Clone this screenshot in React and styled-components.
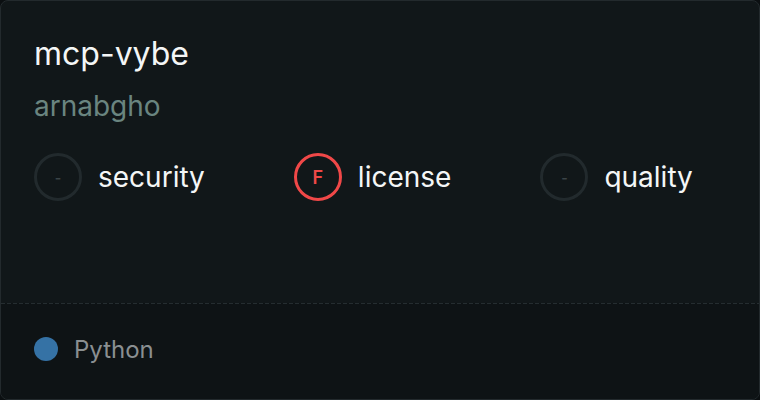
import React from "react";
import styled, { createGlobalStyle } from "styled-components";

const Global = createGlobalStyle`
  html, body {
    margin: 0;
    padding: 0;
    background: #0b0f11;
  }
  body {
    font-family: Inter, "Noto Sans", sans-serif;
  }
`;

const Card = styled.div`
  width: 760px;
  height: 400px;
  box-sizing: border-box;
  border: 1px solid #232a2d;
  border-radius: 8px;
  overflow: hidden;
  display: flex;
  flex-direction: column;
  background: #111719;
`;

const Top = styled.div`
  flex: 1;
  padding: 36px 33px 0;
  display: flex;
  flex-direction: column;
`;

const Title = styled.div`
  color: #f4f6f6;
  font-size: 32px;
  line-height: 34px;
  font-weight: 400;
`;

const Author = styled.div`
  color: #6a8580;
  font-size: 28px;
  line-height: 30px;
  margin-top: 20px;
`;

const Scores = styled.div`
  display: flex;
  gap: 89px;
  margin-top: 32px;
`;

const Score = styled.div`
  display: flex;
  align-items: center;
  gap: 16px;
`;

const Badge = styled.div`
  width: 48px;
  height: 48px;
  box-sizing: border-box;
  border-radius: 50%;
  border: 3px solid ${(p) => (p.$grade ? "#f04848" : "#222a2d")};
  display: flex;
  align-items: center;
  justify-content: center;
  color: ${(p) => (p.$grade ? "#f04848" : "#3b4447")};
  font-size: ${(p) => (p.$grade ? "18px" : "14px")};
  font-weight: 600;
`;

const Label = styled.div`
  color: #f4f6f6;
  font-size: 28px;
  line-height: 30px;
`;

const Footer = styled.div`
  height: 96px;
  box-sizing: border-box;
  padding: 0 33px 4px;
  background: #0e1315;
  display: flex;
  align-items: center;
  gap: 16px;
  background-image: repeating-linear-gradient(
    to right,
    #252d30 0 4px,
    transparent 4px 6px
  );
  background-size: 100% 1px;
  background-repeat: no-repeat;
  background-position: 0 0;
`;

const Dot = styled.span`
  width: 24px;
  height: 24px;
  border-radius: 50%;
  background: ${(p) => p.$color};
`;

const Lang = styled.span`
  color: #8a8f91;
  font-size: 24px;
`;

const scores = [
  { name: "security", grade: null },
  { name: "license", grade: "F" },
  { name: "quality", grade: null },
];

export default function App() {
  return (
    <>
      <Global />
      <Card>
        <Top>
          <Title>mcp-vybe</Title>
          <Author>arnabgho</Author>
          <Scores>
            {scores.map((s) => (
              <Score key={s.name}>
                <Badge $grade={s.grade}>{s.grade || "-"}</Badge>
                <Label>{s.name}</Label>
              </Score>
            ))}
          </Scores>
        </Top>
        <Footer>
          <Dot $color="#3572a5" />
          <Lang>Python</Lang>
        </Footer>
      </Card>
    </>
  );
}
